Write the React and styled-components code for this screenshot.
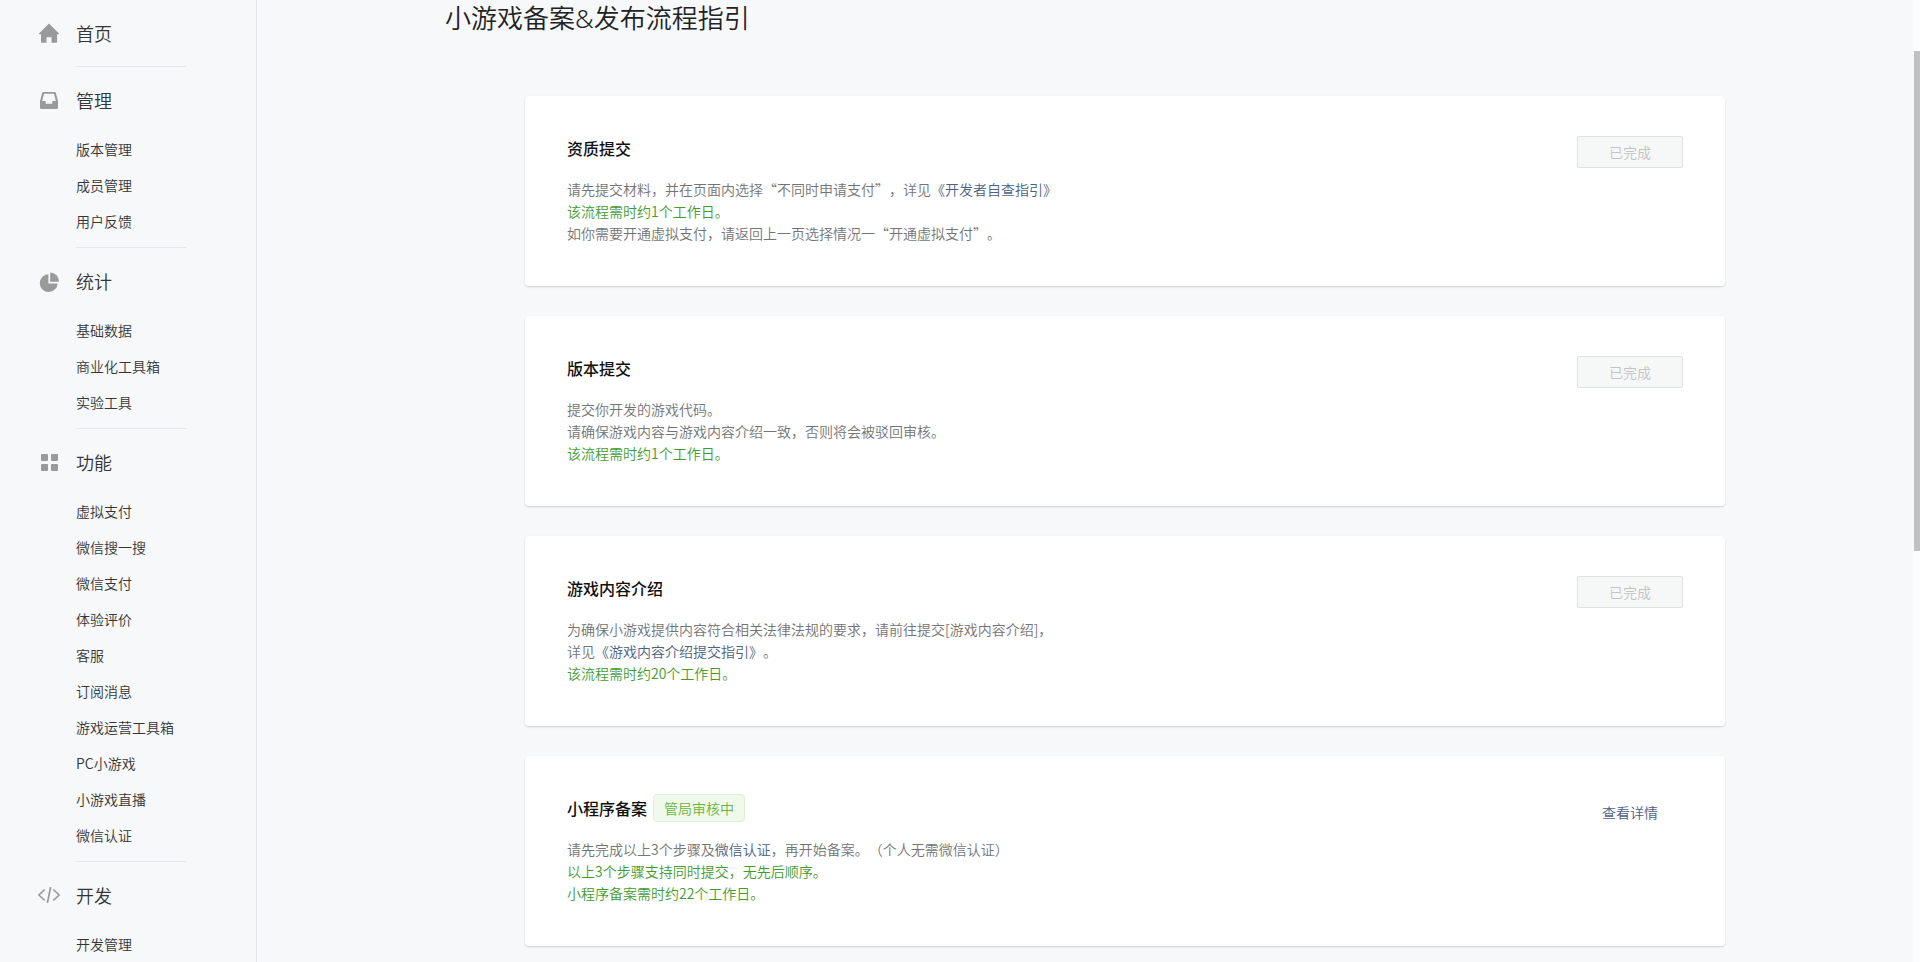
import React from "react";
import styled, { createGlobalStyle } from "styled-components";

const GlobalStyle = createGlobalStyle`
  * {
    box-sizing: border-box;
  }

  body {
    margin: 0;
    background: #f6f8fa;
    color: #353535;
    font-family: "Noto Sans CJK SC", "Noto Sans", sans-serif;
    font-size: 14px;
    font-weight: 350;
    line-height: 22px;
    text-spacing-trim: space-all;
  }

  h1,
  h2,
  h3,
  p,
  ul {
    margin: 0;
    padding: 0;
    font-weight: inherit;
  }

  a {
    color: inherit;
    text-decoration: none;
  }
`;

const Page = styled.div`
  display: flex;
  height: 100vh;
  overflow: hidden;
`;

const Sidebar = styled.nav`
  flex: none;
  width: 257px;
  padding-left: 36px;
  border-right: 1px solid #e4e6e9;
`;

const MenuGroup = styled.section`
  display: grid;
  grid-template-columns: 26px 110px;
  column-gap: 14px;

  & + & > .icon {
    border-top: 1px solid transparent;
  }

  & + & > .body {
    border-top: 1px solid #e4e6e9;
  }

  .icon {
    padding: 22px 2px;
    color: #9a9a9a;
  }

  svg {
    display: block;
    width: 22px;
    height: 22px;
  }
`;

const MenuTitle = styled.h2`
  font-size: 18px;
  line-height: 66px;
`;

const MenuList = styled.ul`
  padding-bottom: 6px;
  list-style: none;

  li {
    height: 36px;
    line-height: 32px;
    white-space: nowrap;
  }
`;

const Main = styled.main`
  flex: 1;
  min-width: 0;
  padding: 0 188px;
`;

const PageTitle = styled.h1`
  color: #222222;
  font-family: "Noto Sans", "Noto Sans CJK SC", sans-serif;
  font-size: 26px;
  line-height: 36px;
`;

const CardList = styled.div`
  display: flex;
  flex-direction: column;
  gap: 30px;
  padding: 60px 0 0 80px;
`;

const Card = styled.article`
  display: flex;
  justify-content: space-between;
  align-items: flex-start;
  padding: 40px 42px;
  background: #ffffff;
  border-radius: 4px;
  box-shadow: 0 1px 2px rgba(0, 0, 0, 0.16);
`;

const CardTitle = styled.h3`
  display: flex;
  align-items: center;
  gap: 6px;
  height: 24px;
  color: #111111;
  font-size: 16px;
  font-weight: 500;
`;

const Tag = styled.span`
  padding: 2px 10px;
  border: 1px solid #dcf2d0;
  border-radius: 4px;
  background: #f0f9eb;
  color: #67b540;
  font-size: 14px;
  font-weight: 350;
`;

const Desc = styled.div`
  padding: 18px 0 2px;
  color: #747474;

  a {
    color: #4c607f;
  }
`;

const Green = styled.p`
  color: #459a2e;
`;

const DoneButton = styled.button`
  width: 106px;
  height: 32px;
  padding: 0;
  border: 1px solid #e0e2e2;
  border-radius: 2px;
  background: #f6f8f8;
  color: #c2c4c4;
  font: inherit;
`;

const DetailLink = styled.a`
  width: 106px;
  color: #4c607f;
  line-height: 32px;
  text-align: center;
`;

const ScrollTrack = styled.div`
  flex: none;
  width: 7px;
  padding: 51px 0 0 1px;
  background: #fcfcfc;
`;

const ScrollThumb = styled.div`
  height: 52vh;
  background: #c1c1c1;
`;

function HomeIcon() {
  return (
    <svg viewBox="0 0 22 22" fill="currentColor">
      <path d="M11 1.5 21 11.5q.3.7-.5.7h-1.4v7.6q0 .9-.9.9h-4.7v-5.5h-5v5.5H3.9q-.9 0-.9-.9v-7.6H1.5q-.8 0-.5-.7z" />
    </svg>
  );
}

function InboxIcon() {
  return (
    <svg viewBox="0 0 22 22" fill="currentColor" fillRule="evenodd">
      <path d="M5.400 3h11.200q1 0 1.300 1L20 12v6.800q0 1.200-1.200 1.200H3.200Q2 20 2 18.800V12L4.100 4q.3-1 1.300-1zM6 4.800 4.200 12h3.500v2.800h6.600V12h3.500L16 4.800z" />
    </svg>
  );
}

function PieIcon() {
  return (
    <svg viewBox="0 0 22 22" fill="currentColor">
      <path d="M10.400 4.200v9.200h9.200A8.900 8.900 0 1 1 10.400 4.200z" />
      <path d="M12.200 2.600A8.900 8.900 0 0 1 21 11.700h-8.800z" />
    </svg>
  );
}

function GridIcon() {
  return (
    <svg viewBox="0 0 22 22" fill="currentColor">
      <rect x="3" y="3" width="7" height="7" rx="1" />
      <rect x="13" y="3" width="7" height="7" rx="1" />
      <rect x="3" y="13" width="7" height="7" rx="1" />
      <rect x="13" y="13" width="7" height="7" rx="1" />
    </svg>
  );
}

function CodeIcon() {
  return (
    <svg viewBox="0 0 22 22" fill="none" stroke="currentColor" strokeWidth="1.7">
      <path d="M6.700 5.500.9 11l5.800 5.500M15.300 5.500l5.800 5.500-5.800 5.500M12.600 3.200 9.400 18.800" />
    </svg>
  );
}

const menu = [
  { title: "首页", icon: <HomeIcon />, items: [] },
  { title: "管理", icon: <InboxIcon />, items: ["版本管理", "成员管理", "用户反馈"] },
  { title: "统计", icon: <PieIcon />, items: ["基础数据", "商业化工具箱", "实验工具"] },
  {
    title: "功能",
    icon: <GridIcon />,
    items: [
      "虚拟支付",
      "微信搜一搜",
      "微信支付",
      "体验评价",
      "客服",
      "订阅消息",
      "游戏运营工具箱",
      "PC小游戏",
      "小游戏直播",
      "微信认证",
    ],
  },
  { title: "开发", icon: <CodeIcon />, items: ["开发管理"] },
];

function Step({ title, tag, action, children }) {
  return (
    <Card>
      <div>
        <CardTitle>
          {title}
          {tag && <Tag>{tag}</Tag>}
        </CardTitle>
        <Desc>{children}</Desc>
      </div>
      {action || <DoneButton disabled>已完成</DoneButton>}
    </Card>
  );
}

export default function App() {
  return (
    <>
      <GlobalStyle />
      <Page>
        <Sidebar>
          {menu.map(({ title, icon, items }) => (
            <MenuGroup key={title}>
              <div className="icon">{icon}</div>
              <div className="body">
                <MenuTitle>
                  <a href="#">{title}</a>
                </MenuTitle>
                {items.length > 0 && (
                  <MenuList>
                    {items.map((item) => (
                      <li key={item}>
                        <a href="#">{item}</a>
                      </li>
                    ))}
                  </MenuList>
                )}
              </div>
            </MenuGroup>
          ))}
        </Sidebar>
        <Main>
          <PageTitle>小游戏备案&amp;发布流程指引</PageTitle>
          <CardList>
            <Step title="资质提交">
              <p>
                请先提交材料，并在页面内选择“不同时申请支付”，详见<a href="#">《开发者自查指引》</a>
              </p>
              <Green>该流程需时约1个工作日。</Green>
              <p>如你需要开通虚拟支付，请返回上一页选择情况一“开通虚拟支付”。</p>
            </Step>
            <Step title="版本提交">
              <p>提交你开发的游戏代码。</p>
              <p>请确保游戏内容与游戏内容介绍一致，否则将会被驳回审核。</p>
              <Green>该流程需时约1个工作日。</Green>
            </Step>
            <Step title="游戏内容介绍">
              <p>为确保小游戏提供内容符合相关法律法规的要求，请前往提交[游戏内容介绍]，</p>
              <p>
                详见<a href="#">《游戏内容介绍提交指引》</a>。
              </p>
              <Green>该流程需时约20个工作日。</Green>
            </Step>
            <Step
              title="小程序备案"
              tag="管局审核中"
              action={<DetailLink href="#">查看详情</DetailLink>}
            >
              <p>
                请先完成以上3个步骤及<a href="#">微信认证</a>，再开始备案。（个人无需微信认证）
              </p>
              <Green>以上3个步骤支持同时提交，无先后顺序。</Green>
              <Green>小程序备案需时约22个工作日。</Green>
            </Step>
          </CardList>
        </Main>
        <ScrollTrack>
          <ScrollThumb />
        </ScrollTrack>
      </Page>
    </>
  );
}
